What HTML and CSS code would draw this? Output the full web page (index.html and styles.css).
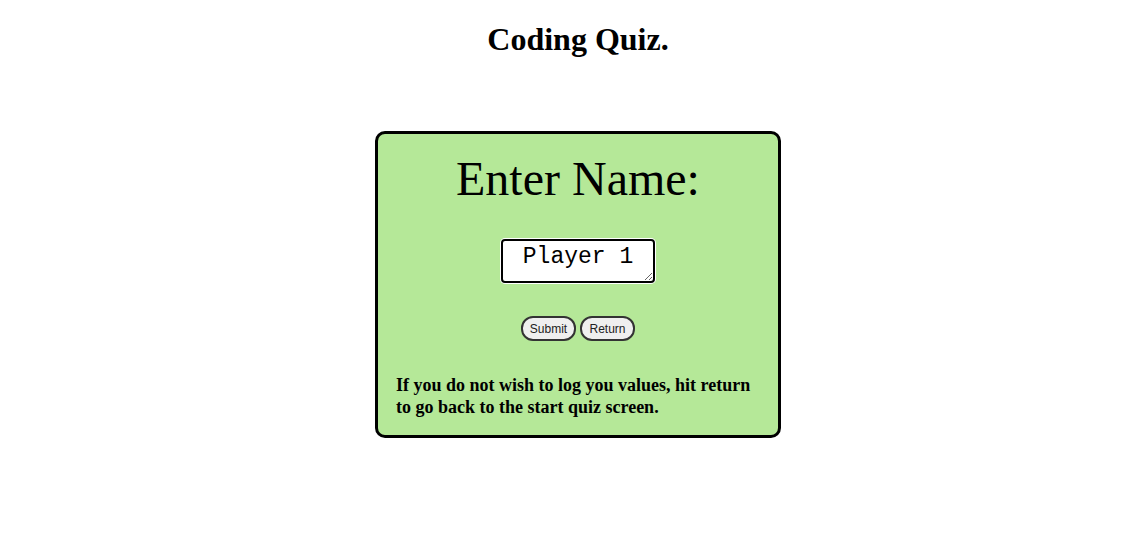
FILE: index.html
```html
<!DOCTYPE html>
<html>
<head>
<meta charset="utf-8">
<link rel="stylesheet" href="styles.css">
</head>
<body>
<h1 class="title">Coding Quiz.</h1>
<div class="card">
  <h2 class="heading">Enter Name:</h2>
  <textarea class="name" spellcheck="false">Player 1</textarea>
  <div class="buttons">
    <button class="btn">Submit</button>
    <button class="btn">Return</button>
  </div>
  <p class="note">If you do not wish to log you values, hit return to go back to the start quiz screen.</p>
</div>
</body>
</html>
```
FILE: styles.css
```css
html, body {
  margin: 0;
  background: #fff;
}
body {
  padding-left: 11px;
  font-family: "Liberation Serif", "Times New Roman", serif;
  color: #000;
  display: flex;
  flex-direction: column;
  align-items: center;
}
.title {
  margin: 21px 0 0;
  font-size: 32px;
  font-weight: bold;
  line-height: 37px;
}
.card {
  margin-top: 73px;
  width: 406px;
  box-sizing: border-box;
  border: 3px solid #000;
  border-radius: 10px;
  background: #b5e898;
  padding: 17px 18px 17px;
  display: flex;
  flex-direction: column;
  align-items: center;
}
.heading {
  margin: 0;
  font-size: 48px;
  font-weight: normal;
  line-height: 55px;
}
.name {
  margin-top: 33px;
  width: 154px;
  height: 44px;
  box-sizing: border-box;
  border: 2px solid #000;
  border-radius: 4px;
  box-shadow: 0 0 0 1px #fff;
  background: #fff;
  font-family: "Liberation Mono", "DejaVu Sans Mono", monospace;
  font-size: 23px;
  line-height: 26px;
  text-align: center;
  padding: 3px 2px;
  color: #000;
  outline: none;
}
.buttons {
  margin-top: 33px;
  display: flex;
  gap: 4px;
}
.btn {
  width: 55px;
  height: 25px;
  box-sizing: border-box;
  border: 2px solid #333;
  border-radius: 12px;
  background: #efefef;
  font-family: "Liberation Sans", Arial, sans-serif;
  font-size: 12px;
  color: #222;
  padding: 0;
}
.note {
  margin: 33px 0 0;
  align-self: stretch;
  font-size: 18px;
  font-weight: bold;
  line-height: 22px;
}
```
